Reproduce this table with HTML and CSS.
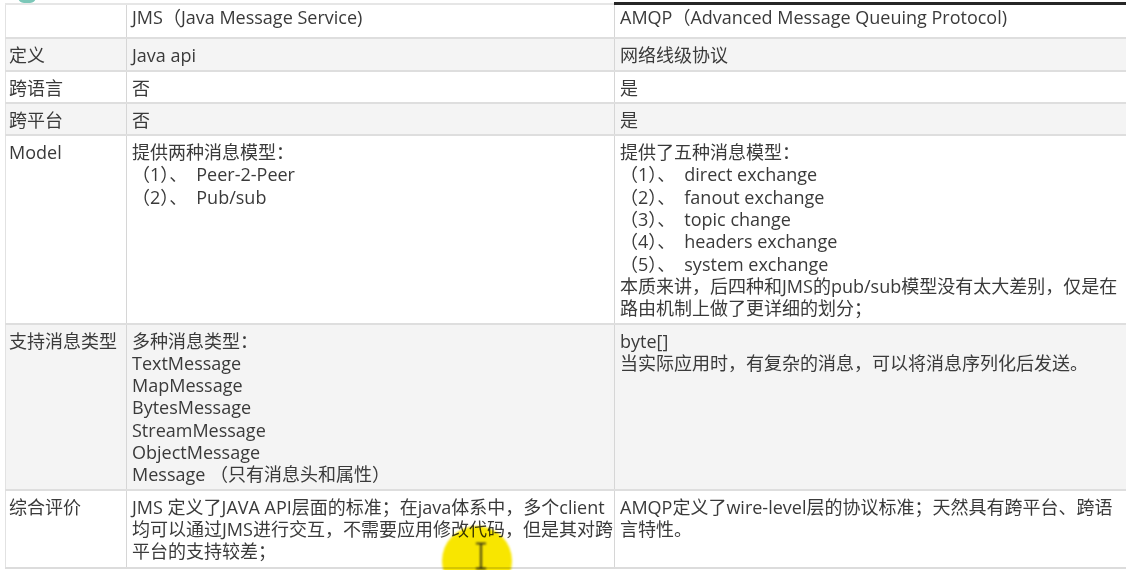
FILE: index.html
```html
<!DOCTYPE html>
<html lang="zh-CN">
<head>
<meta charset="utf-8">
<title>JMS vs AMQP</title>
<link rel="stylesheet" href="styles.css">
</head>
<body>
<div class="page">
  <span class="tab-edge"></span>
  <table class="cmp">
    <colgroup>
      <col class="c-label">
      <col class="c-jms">
      <col class="c-amqp">
    </colgroup>
    <tr class="head">
      <td class="first"></td>
      <td>JMS（Java Message Service)</td>
      <td class="dark">AMQP（Advanced Message Queuing Protocol)</td>
    </tr>
    <tr class="alt">
      <td class="first">定义</td>
      <td>Java api</td>
      <td>网络线级协议</td>
    </tr>
    <tr>
      <td class="first">跨语言</td>
      <td>否</td>
      <td>是</td>
    </tr>
    <tr class="alt">
      <td class="first">跨平台</td>
      <td>否</td>
      <td>是</td>
    </tr>
    <tr>
      <td class="first">Model</td>
      <td>提供两种消息模型：<br>（1）、&ensp;Peer-2-Peer<br>（2）、&ensp;Pub/sub</td>
      <td>提供了五种消息模型：<br>（1）、&ensp;direct exchange<br>（2）、&ensp;fanout exchange<br>（3）、&ensp;topic change<br>（4）、&ensp;headers exchange<br>（5）、&ensp;system exchange<br>本质来讲，后四种和JMS的pub/sub模型没有太大差别，仅是在<br>路由机制上做了更详细的划分；</td>
    </tr>
    <tr class="alt">
      <td class="first">支持消息类型</td>
      <td>多种消息类型：<br>TextMessage<br>MapMessage<br>BytesMessage<br>StreamMessage<br>ObjectMessage<br>Message （只有消息头和属性）</td>
      <td>byte[]<br>当实际应用时，有复杂的消息，可以将消息序列化后发送。</td>
    </tr>
    <tr class="last">
      <td class="first">综合评价</td>
      <td>JMS 定义了JAVA API层面的标准；在java体系中，多个client<br>均可以通过JMS进行交互，不需要应用修改代码，但是其对跨<br>平台的支持较差；</td>
      <td>AMQP定义了wire-level层的协议标准；天然具有跨平台、跨语<br>言特性。</td>
    </tr>
  </table>
  <div class="cursor-spot">
    <svg class="ibeam" width="12" height="28" viewBox="0 0 12 28">
      <path d="M1 1.5h10M6 1.5v25M1 26.5h10" stroke="#1a1a1a" stroke-width="1.6" fill="none"/>
    </svg>
  </div>
</div>
</body>
</html>
```
FILE: styles.css
```css
html, body {
  margin: 0;
  padding: 0;
  background: #ffffff;
  overflow: hidden;
}

.page {
  position: relative;
  width: 1126px;
  height: 570px;
  overflow: hidden;
  padding: 2px 0 0 5px;
  box-sizing: border-box;
  font-family: "Open Sans", "Noto Sans CJK SC", sans-serif;
  font-size: 18px;
  color: #3a3a3a;
}

.tab-edge {
  position: absolute;
  left: 18px;
  top: -3px;
  width: 18px;
  height: 6px;
  border-radius: 0 0 9px 9px;
  background: #7cc7b8;
}

.cmp {
  border-collapse: collapse;
  table-layout: fixed;
  width: 1134px;
}

.c-label { width: 121px; }
.c-jms { width: 488px; }
.c-amqp { width: 525px; }

.cmp td {
  vertical-align: top;
  padding: 5px 4px 3px 5px;
  line-height: 22.3px;
  white-space: nowrap;
  border-top: 2px solid #dedede;
  border-left: 1px solid #d6d6d6;
}

.cmp td.first {
  padding-left: 3px;
  border-left: 1px solid #e2e2e2;
}

.cmp tr.head td {
  padding-top: 1px;
  padding-bottom: 9px;
  border-top: 2px solid #e6e6e6;
}

.cmp tr.head td.dark {
  border-top: 3px solid #262626;
}

.cmp tr.alt td {
  background: #f4f4f4;
}

.cmp tr.last td {
  border-bottom: 2px solid #dcdcdc;
  height: 68px;
}

.cursor-spot {
  position: absolute;
  left: 442px;
  top: 526px;
  width: 70px;
  height: 70px;
  border-radius: 50%;
  background: #f8e600;
  mix-blend-mode: multiply;
  filter: blur(0.8px);
}

.ibeam {
  position: absolute;
  left: 33px;
  top: 16px;
}
```
